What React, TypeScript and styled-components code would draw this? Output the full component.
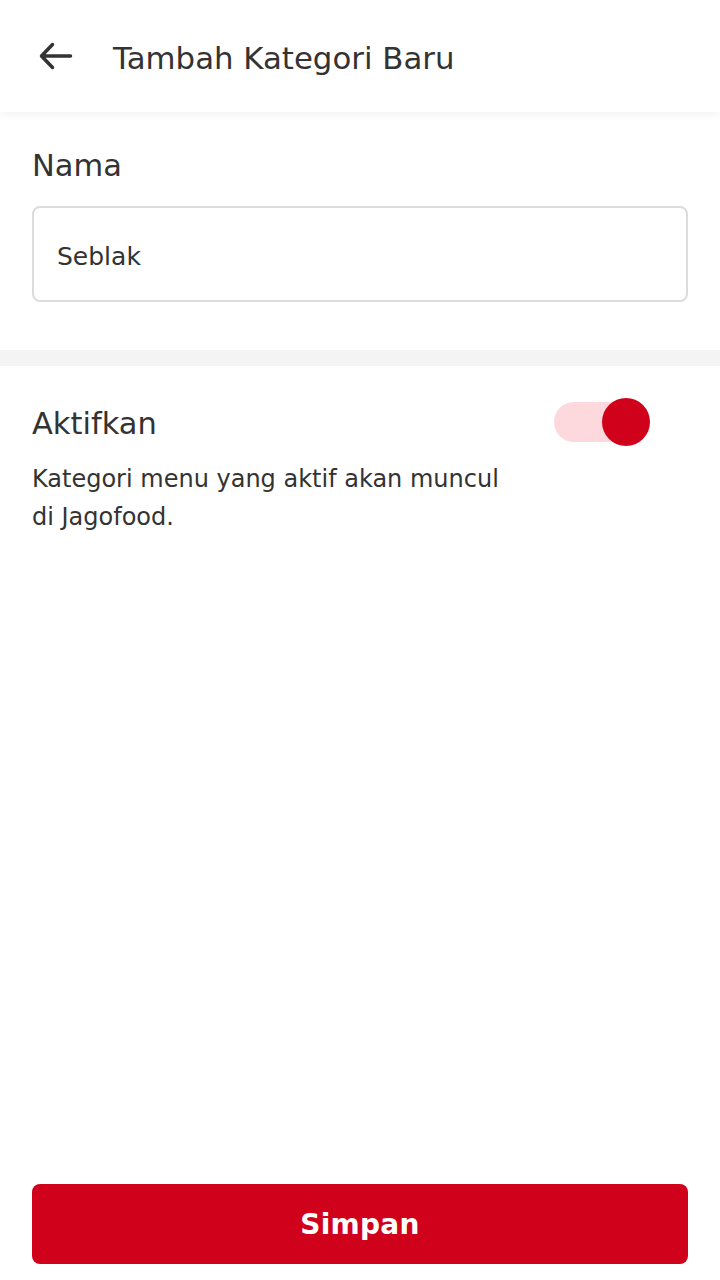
import React, { useState } from "react";
import styled, { createGlobalStyle } from "styled-components";

const Global = createGlobalStyle`
  html, body { margin: 0; padding: 0; background: #fff; }
  body { font-family: "DejaVu Sans", "Noto Sans", sans-serif; color: #333; }
  * { box-sizing: border-box; }
`;

const Page = styled.div`
  min-height: 1280px;
  display: flex;
  flex-direction: column;
  background: #fff;
`;

const Header = styled.header`
  height: 112px;
  display: flex;
  align-items: center;
  padding-left: 38px;
  gap: 39px;
  background: #fff;
  box-shadow: 0 3px 8px rgba(0, 0, 0, 0.05);
  position: relative;
  z-index: 1;
`;

const BackButton = styled.button`
  width: 36px;
  height: 36px;
  padding: 0;
  border: none;
  background: none;
  display: flex;
  align-items: center;
  justify-content: center;
  color: #333;
`;

const Title = styled.h1`
  margin: 0;
  padding-top: 3px;
  font-size: 30.8px;
  font-weight: 400;
  color: #333;
`;

const Section = styled.section`
  padding: 34px 32px 48px;
  background: #fff;
`;

const Label = styled.div`
  font-size: 30.5px;
  font-weight: 400;
  color: #333;
  line-height: 40px;
`;

const Input = styled.input`
  margin-top: 20px;
  width: 100%;
  height: 96px;
  border: 2px solid #dcdcdc;
  border-radius: 8px;
  padding: 5px 23px 0;
  font-family: inherit;
  font-size: 25px;
  color: #333;
  outline: none;
`;

const Divider = styled.div`
  height: 16px;
  background: #f4f4f4;
`;

const ToggleSection = styled.section`
  padding: 34px 32px 0;
  flex: 1;
`;

const ToggleRow = styled.div`
  display: flex;
  align-items: center;
  justify-content: space-between;
  padding-right: 70px;
`;

const ToggleLabel = styled(Label)`
  padding-top: 4px;
`;

const Description = styled.p`
  margin: 16px 0 0;
  max-width: 480px;
  font-size: 24px;
  line-height: 38px;
  color: #333;
`;

const Track = styled.button<{ $on: boolean }>`
  position: relative;
  width: 88px;
  height: 40px;
  margin-right: -24px;
  padding: 0;
  border: none;
  border-radius: 20px;
  background: ${(p) => (p.$on ? "#fdd9dd" : "#e0e0e0")};
  cursor: pointer;
`;

const Thumb = styled.span<{ $on: boolean }>`
  position: absolute;
  top: -4px;
  left: ${(p) => (p.$on ? "48px" : "-4px")};
  width: 48px;
  height: 48px;
  border-radius: 50%;
  background: ${(p) => (p.$on ? "#d0021b" : "#fafafa")};
`;

const Footer = styled.div`
  padding: 0 32px 16px;
`;

const SaveButton = styled.button`
  width: 100%;
  height: 80px;
  border: none;
  border-radius: 8px;
  background: #d0021b;
  color: #fff;
  font-family: inherit;
  font-size: 28px;
  font-weight: 600;
  letter-spacing: 0.3px;
`;

export default function App() {
  const [on, setOn] = useState(true);
  return (
    <Page>
      <Global />
      <Header>
        <BackButton aria-label="Kembali">
          <svg width="36" height="36" viewBox="0 0 36 36" fill="none">
            <path
              d="M32.5 18H4M14.5 6.5L3.5 18L14.5 29.5"
              stroke="#333"
              strokeWidth="3.5"
              strokeLinecap="round"
              strokeLinejoin="round"
            />
          </svg>
        </BackButton>
        <Title>Tambah Kategori Baru</Title>
      </Header>
      <Section>
        <Label>Nama</Label>
        <Input defaultValue="Seblak" />
      </Section>
      <Divider />
      <ToggleSection>
        <ToggleRow>
          <ToggleLabel>Aktifkan</ToggleLabel>
          <Track $on={on} onClick={() => setOn(!on)} aria-label="Aktifkan">
            <Thumb $on={on} />
          </Track>
        </ToggleRow>
        <Description>
          Kategori menu yang aktif akan muncul di Jagofood.
        </Description>
      </ToggleSection>
      <Footer>
        <SaveButton>Simpan</SaveButton>
      </Footer>
    </Page>
  );
}
